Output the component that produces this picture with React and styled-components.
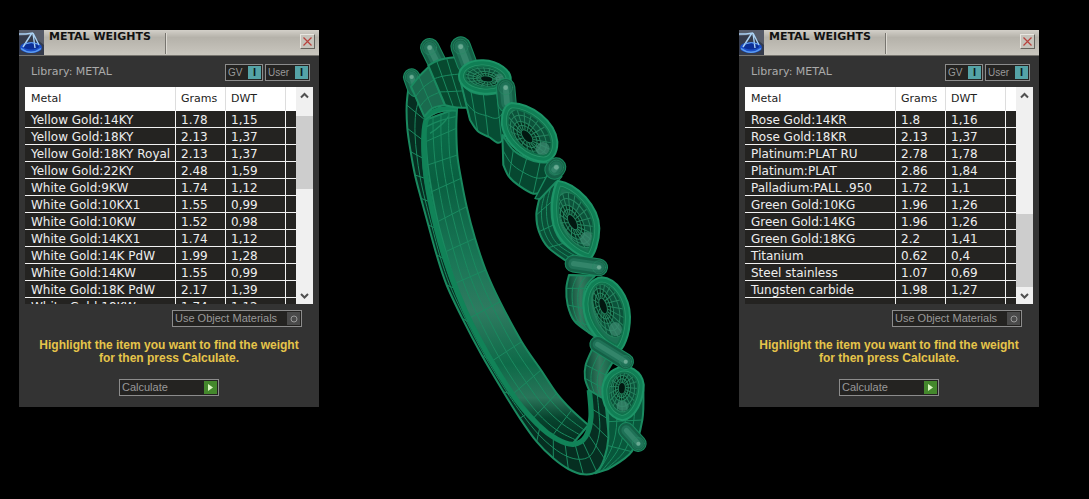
import React, { useState } from "react";
import styled, { createGlobalStyle } from "styled-components";

const goldRows = [
  ["Yellow Gold:14KY", "1.78", "1,15"],
  ["Yellow Gold:18KY", "2.13", "1,37"],
  ["Yellow Gold:18KY Royal", "2.13", "1,37"],
  ["Yellow Gold:22KY", "2.48", "1,59"],
  ["White Gold:9KW", "1.74", "1,12"],
  ["White Gold:10KX1", "1.55", "0,99"],
  ["White Gold:10KW", "1.52", "0,98"],
  ["White Gold:14KX1", "1.74", "1,12"],
  ["White Gold:14K PdW", "1.99", "1,28"],
  ["White Gold:14KW", "1.55", "0,99"],
  ["White Gold:18K PdW", "2.17", "1,39"],
  ["White Gold:18KW", "1.74", "1,12"],
];

const otherRows = [
  ["Rose Gold:14KR", "1.8", "1,16"],
  ["Rose Gold:18KR", "2.13", "1,37"],
  ["Platinum:PLAT RU", "2.78", "1,78"],
  ["Platinum:PLAT", "2.86", "1,84"],
  ["Palladium:PALL .950", "1.72", "1,1"],
  ["Green Gold:10KG", "1.96", "1,26"],
  ["Green Gold:14KG", "1.96", "1,26"],
  ["Green Gold:18KG", "2.2", "1,41"],
  ["Titanium", "0.62", "0,4"],
  ["Steel stainless", "1.07", "0,69"],
  ["Tungsten carbide", "1.98", "1,27"],
  ["", "", ""],
];

function App() {
  return (
    <>
      <GlobalStyle />
      <Viewport>
        <WeightsPanel rows={goldRows} thumbStart={12} />
        <RingView />
        <WeightsPanel rows={otherRows} thumbStart={110} />
      </Viewport>
    </>
  );
}

function WeightsPanel({ rows, thumbStart }) {
  const [gv, setGv] = useState(true);
  const [user, setUser] = useState(true);

  return (
    <Panel>
      <TitleBar>
        <ScaleIcon />
        <Title>METAL WEIGHTS</Title>
        <TitleDivider />
        <CloseButton aria-label="Close">
          <svg width="9" height="9" viewBox="0 0 9 9">
            <path d="M0.5 0.5L8.5 8.5M8.5 0.5L0.5 8.5" stroke="#b8403c" strokeWidth="1.2" />
          </svg>
        </CloseButton>
      </TitleBar>

      <LibraryRow>
        <LibraryName>Library: METAL</LibraryName>
        <PanelButton $width={38} aria-pressed={gv} onClick={() => setGv(!gv)}>
          GV<Lamp $tone="teal">I</Lamp>
        </PanelButton>
        <PanelButton $width={45} aria-pressed={user} onClick={() => setUser(!user)}>
          User<Lamp $tone="teal">I</Lamp>
        </PanelButton>
      </LibraryRow>

      <ListBox>
        <MetalTable>
          <colgroup>
            <col />
            <col width="50" />
            <col width="60" />
            <col width="10" />
          </colgroup>
          <thead>
            <tr>
              <th>Metal</th>
              <th>Grams</th>
              <th>DWT</th>
              <th aria-label="Notes" />
            </tr>
          </thead>
          <tbody>
            {rows.map(([metal, grams, dwt], idx) => (
              <tr key={idx}>
                <td>{metal}</td>
                <td>{grams}</td>
                <td>{dwt}</td>
                <td />
              </tr>
            ))}
          </tbody>
        </MetalTable>
        <ScrollBar>
          <ScrollButton aria-label="Scroll up">
            <Chevron d="M1 5.5L4.5 2L8 5.5" />
          </ScrollButton>
          <ScrollTrack>
            <ScrollThumb style={{ marginTop: thumbStart }} />
          </ScrollTrack>
          <ScrollButton aria-label="Scroll down">
            <Chevron d="M1 2L4.5 5.5L8 2" />
          </ScrollButton>
        </ScrollBar>
      </ListBox>

      <MaterialsRow>
        <PanelButton $width={130}>
          Use Object Materials
          <Lamp $tone="grey">
            <svg width="8" height="8" viewBox="0 0 8 8">
              <circle cx="4" cy="4" r="3" fill="none" stroke="#999" />
            </svg>
          </Lamp>
        </PanelButton>
      </MaterialsRow>

      <Hint>
        Highlight the item you want to find the weight
        <br />
        for then press Calculate.
      </Hint>

      <CalculateRow>
        <PanelButton $width={100}>
          Calculate
          <Lamp $tone="green">
            <svg width="5" height="7" viewBox="0 0 5 7">
              <path d="M0 0L5 3.5L0 7Z" fill="#d9f7c0" />
            </svg>
          </Lamp>
        </PanelButton>
      </CalculateRow>
    </Panel>
  );
}

function Chevron({ d }) {
  return (
    <svg width="9" height="8" viewBox="0 0 9 8">
      <path d={d} fill="none" stroke="#505050" strokeWidth="2" />
    </svg>
  );
}

function ScaleIcon() {
  return (
    <svg width="25" height="25" viewBox="0 0 25 25">
      <rect width="25" height="25" fill="#565b68" />
      <path d="M0 6L12 5L25 15V25H0Z" fill="#353b4b" />
      <ellipse cx="12" cy="17.5" rx="11" ry="5.5" fill="#1c50c8" />
      <ellipse cx="12" cy="16.5" rx="8" ry="3" fill="#0c2f96" />
      <path d="M2 18.5Q12 26 22 18.5" fill="none" stroke="#5d9df0" strokeWidth="1.5" />
      <path d="M0 4H7L14 3M13 3L4 17M14 3L16 18M14 3L20 15" fill="none" stroke="#a9d0f2" strokeWidth="1.4" />
      <path d="M6 14Q12 11 19 14" fill="none" stroke="#6da6ec" />
    </svg>
  );
}

// ---- Wireframe ring. One unit is a third of a pixel. ----

const DARK = "#063d2a";
const LINE = "#1a8a60";

// smooth path through a list of points
function curve(pts) {
  let d = `M${pts[0][0]} ${pts[0][1]}`;
  for (let i = 0; i < pts.length - 1; i++) {
    const p0 = pts[i - 1] || pts[i];
    const p1 = pts[i];
    const p2 = pts[i + 1];
    const p3 = pts[i + 2] || p2;
    d += `C${p1[0] + (p2[0] - p0[0]) / 6} ${p1[1] + (p2[1] - p0[1]) / 6} ${p2[0] - (p3[0] - p1[0]) / 6} ${p2[1] - (p3[1] - p1[1]) / 6} ${p2[0]} ${p2[1]}`;
  }
  return d;
}

const blend = (a, b, t) => a.map((p, i) => [p[0] + (b[i][0] - p[0]) * t, p[1] + (b[i][1] - p[1]) * t]);

// surface stretched between two edges, with lanes along it and a rung at each point
function Ribbon({ a, b, lanes = 3, fill = DARK, line = 3, edge = 6 }) {
  const back = [...b].reverse();
  const outline = `${curve(a)}L${curve(back).slice(1)}Z`;
  return (
    <g fill="none" stroke={LINE} strokeLinejoin="round">
      <path d={outline} fill={fill} strokeWidth={edge} />
      {Array.from({ length: lanes - 1 }, (_, i) => (
        <path key={i} d={curve(blend(a, b, (i + 1) / lanes))} strokeWidth={line} />
      ))}
      {a.map((p, i) => (
        <path key={i} d={`M${p[0]} ${p[1]}L${b[i][0]} ${b[i][1]}`} strokeWidth={line} />
      ))}
    </g>
  );
}

// rounded prong drawn as layered strokes, the tip at "from"
function Prong({ from, to, width }) {
  const d = `M${from[0]} ${from[1]}L${to[0]} ${to[1]}`;
  return (
    <g fill="none" strokeLinecap="round">
      <path d={d} stroke={LINE} strokeWidth={width} />
      <path d={d} stroke="#146046" strokeWidth={width - 6} />
      <path d={d} stroke="#1f7257" strokeWidth={width * 0.6} />
      <path d={d} stroke="#33856a" strokeWidth={width * 0.3} />
      <circle cx={from[0]} cy={from[1]} r={width * 0.36} stroke="#258a64" strokeWidth="2" />
      <circle cx={from[0]} cy={from[1]} r={width * 0.12} fill="#7fb8a3" fillOpacity="0.7" />
    </g>
  );
}

// marquise collet: broad rim, meshed inner wall and the open pit
function Collet({ id, rim, cx, cy, angle, mouth, pit, spokes = 18 }) {
  const [rx, ry] = mouth;
  return (
    <g>
      <clipPath id={id}>
        <path d={rim} />
      </clipPath>
      <path d={rim} fill="#1b7253" />
      <g clipPath={`url(#${id})`} fill="none">
        <g transform={`translate(${cx} ${cy}) rotate(${angle})`} stroke="#25845f" strokeWidth="3">
          <ellipse rx={rx} ry={ry} fill="#0c523a" />
          <ellipse cx={pit[0]} cy={pit[1]} rx={rx * 0.62} ry={ry * 0.6} fill="#05301f" />
          {Array.from({ length: spokes }, (_, i) => {
            const t = (i / spokes) * Math.PI * 2;
            return (
              <path
                key={i}
                d={`M${pit[0] + Math.cos(t) * rx * 0.3} ${pit[1] + Math.sin(t) * ry * 0.26}L${Math.cos(t) * rx} ${Math.sin(t) * ry}`}
              />
            );
          })}
          <ellipse cx={pit[0] / 2} cy={pit[1] / 2} rx={rx * 0.82} ry={ry * 0.8} />
          <ellipse cx={pit[0]} cy={pit[1]} rx={rx * 0.46} ry={ry * 0.44} />
          <ellipse cx={pit[0]} cy={pit[1]} rx={rx * 0.28} ry={ry * 0.24} fill="#021710" />
          <ellipse cx={rx * 0.72} cy="0" rx={rx * 0.24} ry={ry * 0.42} fill="#3b8a6f" fillOpacity="0.75" stroke="none" />
        </g>
        <path d={rim} stroke="#10724c" strokeWidth="40" />
        <path d={rim} stroke="#279469" strokeWidth="30" />
        <path d={rim} stroke="#107f55" strokeWidth="25" />
      </g>
      <path d={rim} fill="none" stroke="#1d9467" strokeWidth="6" />
    </g>
  );
}

function RingView() {
  return (
    <RingCanvas viewBox="-228 -75 1260 1497" role="img" aria-label="Wireframe ring">
      <defs>
        <linearGradient id="bandShade" x1="0" y1="250" x2="0" y2="1260" gradientUnits="userSpaceOnUse">
          <stop offset="0" stopColor="#0b6d4a" />
          <stop offset="0.22" stopColor="#095f40" />
          <stop offset="0.45" stopColor="#1a7656" />
          <stop offset="0.6" stopColor="#2f7a60" />
          <stop offset="0.76" stopColor="#0e6a48" />
          <stop offset="0.86" stopColor="#2a7459" />
          <stop offset="0.92" stopColor="#07442e" />
          <stop offset="1" stopColor="#042a1d" />
        </linearGradient>
        <linearGradient id="wallShade">
          <stop offset="0" stopColor="#06452f" />
          <stop offset="0.5" stopColor="#35795f" />
          <stop offset="1" stopColor="#0a5f40" />
        </linearGradient>
      </defs>

      {/* back of the shank, lower right */}
      <Ribbon
        a={[[632, 1115], [640, 1190], [632, 1260], [600, 1345]]}
        b={[[745, 1080], [742, 1185], [710, 1280], [640, 1332]]}
        lanes={4}
        fill="#08573b"
      />

      {/* inside of the band */}
      <Ribbon
        a={[[90, 285], [92, 350], [98, 420], [110, 500], [128, 590], [152, 680], [180, 775], [222, 880], [288, 1010], [350, 1110], [410, 1185], [470, 1235], [530, 1260]]}
        b={[[186, 250], [184, 310], [187, 390], [198, 460], [215, 545], [240, 640], [272, 735], [315, 830], [380, 950], [438, 1035], [485, 1105], [530, 1155], [580, 1200]]}
        lanes={4}
        fill="url(#bandShade)"
      />

      {/* front side of the band */}
      <Ribbon
        a={[[42, 175], [35, 240], [37, 310], [47, 380], [60, 450], [78, 520], [100, 600], [125, 690], [155, 780], [202, 880], [260, 990], [325, 1100], [375, 1180], [425, 1250], [475, 1300], [520, 1332], [565, 1348], [605, 1340], [628, 1300], [640, 1240], [636, 1180], [630, 1115]]}
        b={[[110, 245], [90, 285], [83, 345], [84, 400], [90, 460], [103, 530], [122, 610], [146, 700], [178, 790], [226, 895], [284, 1005], [350, 1108], [396, 1165], [435, 1205], [475, 1237], [510, 1255], [540, 1258], [562, 1248], [578, 1225], [588, 1190], [588, 1150], [583, 1095]]}
        lanes={2}
        fill="#062e21"
      />
      <path
        d={curve([[186, 250], [125, 256], [92, 290], [88, 400], [106, 530], [150, 700], [228, 895], [350, 1105], [430, 1200], [485, 1242], [535, 1258], [572, 1235], [588, 1175], [583, 1095]])}
        fill="none"
        stroke="#118358"
        strokeWidth="16"
      />
      <path d="M90 285Q130 250 186 258M95 305Q130 285 182 275M105 325Q145 300 160 275" fill="none" stroke={LINE} strokeWidth="4" />

      {/* head, upper left */}
      <Prong from={[50, 156]} to={[62, 190]} width={52} />
      <Ribbon a={[[48, 185], [72, 155], [102, 125]]} b={[[88, 275], [112, 250], [150, 240]]} lanes={3} fill="#1a6a4e" />
      <Prong from={[104, 68]} to={[126, 112]} width={58} />
      <Ribbon a={[[100, 122], [125, 108], [155, 100], [188, 96]]} b={[[150, 240], [175, 246], [200, 248], [226, 248]]} lanes={3} fill="#07492f" />
      <Prong from={[197, 65]} to={[216, 116]} width={62} />

      {/* first stone */}
      <Ribbon a={[[198, 175], [228, 200], [265, 208], [305, 205], [345, 190]]} b={[[225, 285], [248, 318], [280, 335], [320, 348], [355, 240]]} lanes={2} fill="#064d34" />
      <Collet id="rim1" cx={270} cy={155} angle={8} mouth={[66, 36]} pit={[6, 6]} rim="M192 150C195 120 232 104 265 106C310 108 350 135 347 166C342 195 305 208 268 206C225 202 190 182 192 150Z" />
      <Prong from={[332, 188]} to={[336, 234]} width={58} />

      {/* second stone */}
      <Ribbon a={[[322, 330], [355, 375], [395, 400], [435, 412], [482, 410]]} b={[[325, 420], [342, 455], [372, 482], [415, 506], [440, 500]]} lanes={2} fill="#064730" />
      <Collet id="rim2" cx={404} cy={325} angle={50} mouth={[84, 50]} pit={[2, 12]} rim="M350 234C410 236 480 288 487 350C488 385 472 408 446 410C392 408 330 358 321 300C318 262 330 238 350 234Z" />
      <path d="M462 440L420 520Q440 530 470 490L500 455Z" fill="#064530" stroke={LINE} strokeWidth="4" />
      <Prong from={[484, 427]} to={[478, 434]} width={60} />

      {/* third stone */}
      <Ribbon a={[[484, 470], [470, 530], [475, 600], [505, 655], [585, 702]]} b={[[432, 525], [424, 570], [432, 620], [460, 668], [520, 712]]} lanes={3} fill="#0a4f37" />
      <Collet id="rim3" cx={545} cy={585} angle={62} mouth={[90, 48]} pit={[0, 14]} rim="M488 467C548 476 612 545 613 610C613 652 598 690 585 702C538 690 490 648 476 600C466 550 472 500 488 467Z" />

      {/* fourth stone */}
      <Ribbon a={[[600, 752], [570, 790], [566, 850], [578, 900], [600, 935]]} b={[[522, 750], [514, 790], [518, 840], [538, 888], [580, 922]]} lanes={3} fill="url(#wallShade)" />
      <Prong from={[612, 727]} to={[536, 716]} width={54} />
      <Collet id="rim4" cx={642} cy={852} angle={72} mouth={[88, 46]} pit={[-14, 14]} rim="M620 757C664 760 704 814 705 875C705 932 684 976 668 980C620 966 566 906 565 836C568 788 590 760 620 757Z" />

      {/* fifth stone */}
      <Ribbon a={[[660, 1000], [632, 1050], [625, 1090], [632, 1125]]} b={[[592, 972], [572, 1020], [570, 1060], [582, 1095]]} lanes={3} fill="url(#wallShade)" />
      <Collet id="rim5" cx={686} cy={1098} angle={94} mouth={[62, 44]} pit={[-8, 6]} rim="M665 1030C700 1012 742 1040 746 1078C746 1125 722 1180 682 1186C640 1178 620 1138 622 1090C626 1060 640 1040 665 1030Z" />
      <Prong from={[692, 1010]} to={[608, 958]} width={50} />
      <Prong from={[730, 1256]} to={[694, 1216]} width={50} />
    </RingCanvas>
  );
}

// Styled Components
const GlobalStyle = createGlobalStyle`
  * {
    box-sizing: border-box;
  }
  body {
    margin: 0;
    background: #000;
    font-family: "DejaVu Sans", Verdana, sans-serif;
  }
`;

const Viewport = styled.main`
  display: grid;
  grid-template-columns: 300px minmax(0, 1fr) 300px;
  align-items: start;
  min-height: 100vh;
  padding: 0 50px 0 19px;
  background: #000;
`;

const RingCanvas = styled.svg`
  display: block;
  width: 100%;
  max-height: 100vh;
`;

const Panel = styled.section`
  display: flex;
  flex-direction: column;
  margin-top: 30px;
  padding-bottom: 11px;
  background: #333;
`;

const TitleBar = styled.header`
  display: flex;
  align-items: flex-start;
  height: 26px;
  padding-right: 4px;
  border-bottom: 1px solid #77756f;
  background: linear-gradient(#d3d0c9, #b5b2aa 30%, #c9c6be);
`;

const Title = styled.h2`
  margin: 0;
  padding-left: 5px;
  color: #111;
  font-size: 11px;
  font-weight: 700;
  line-height: 14px;
  white-space: nowrap;
`;

const TitleDivider = styled.div`
  width: 2px;
  height: 21px;
  margin: 3px auto 0 14px;
  border-left: 1px solid #77756f;
  border-right: 1px solid #dedbd4;
`;

const CloseButton = styled.button`
  display: flex;
  align-items: center;
  justify-content: center;
  width: 15px;
  height: 15px;
  margin-top: 4px;
  padding: 0;
  border: 1px solid;
  border-color: #e8e6e0 #66645e #66645e #e8e6e0;
  background: #c6c3bb;
`;

const LibraryRow = styled.div`
  display: flex;
  align-items: center;
  gap: 2px;
  height: 31px;
  padding: 1px 9px 0 12px;
`;

const LibraryName = styled.span`
  flex: 1;
  color: #aaa;
  font-size: 11px;
  line-height: 14px;
`;

const PanelButton = styled.button`
  display: flex;
  align-items: center;
  justify-content: space-between;
  width: ${({ $width }) => $width}px;
  height: 17px;
  padding: 0 1px 0 2px;
  border: 1px solid #8c8c8c;
  background: #242321;
  color: #999;
  font-family: "Liberation Sans", Arial, sans-serif;
  font-size: ${({ $width }) => ($width < 50 ? 10 : 11)}px;
  line-height: 15px;
  white-space: nowrap;
`;

const lampColors = {
  teal: "#55a3a6",
  grey: "#4a4a4a",
  green: "#44882c",
};

const Lamp = styled.span`
  display: flex;
  align-items: center;
  justify-content: center;
  width: 13px;
  height: 13px;
  background: ${({ $tone }) => lampColors[$tone]};
  color: #0c1c1c;
  font-size: 11px;
  font-weight: 700;
`;

const ListBox = styled.div`
  display: flex;
  align-items: flex-start;
  height: 217px;
  margin: 0 6px;
  overflow: hidden;
  background: #242321;
`;

const MetalTable = styled.table`
  flex: 1;
  table-layout: fixed;
  border-collapse: separate;
  border-spacing: 0;
  color: #eee;

  th,
  td {
    height: 17px;
    padding: 2px 0 0 5px;
    border-right: 1px solid #f2f2f2;
    border-bottom: 1px solid #f2f2f2;
    text-align: left;
    font-size: 12px;
    font-weight: 400;
    line-height: 14px;
    white-space: nowrap;
  }

  th {
    height: 24px;
    padding-top: 0;
    border-right-color: #ddd;
    border-bottom-color: #fff;
    background: #fff;
    color: #222;
    font-size: 11px;
  }

  th:first-child,
  td:first-child {
    padding-left: 6px;
  }

  th:last-child,
  td:last-child {
    padding: 0;
    border-right: 0;
  }
`;

const ScrollBar = styled.div`
  display: flex;
  flex-direction: column;
  width: 17px;
  height: 100%;
  background: #f0f0f0;
`;

const ScrollButton = styled.button`
  display: flex;
  align-items: center;
  justify-content: center;
  width: 17px;
  height: 17px;
  padding: 0;
  border: 0;
  background: #f0f0f0;
`;

const ScrollTrack = styled.div`
  flex: 1;
`;

const ScrollThumb = styled.div`
  height: 73px;
  background: #cdcdcd;
`;

const MaterialsRow = styled.div`
  display: flex;
  justify-content: flex-end;
  padding: 6px 17px 0;
`;

const Hint = styled.p`
  margin: 12px 0 14px;
  color: #e6c54a;
  font-family: "Liberation Sans", Arial, sans-serif;
  font-size: 12px;
  font-weight: 700;
  line-height: 13px;
  text-align: center;
`;

const CalculateRow = styled.div`
  display: flex;
  justify-content: center;
`;

export default App;
